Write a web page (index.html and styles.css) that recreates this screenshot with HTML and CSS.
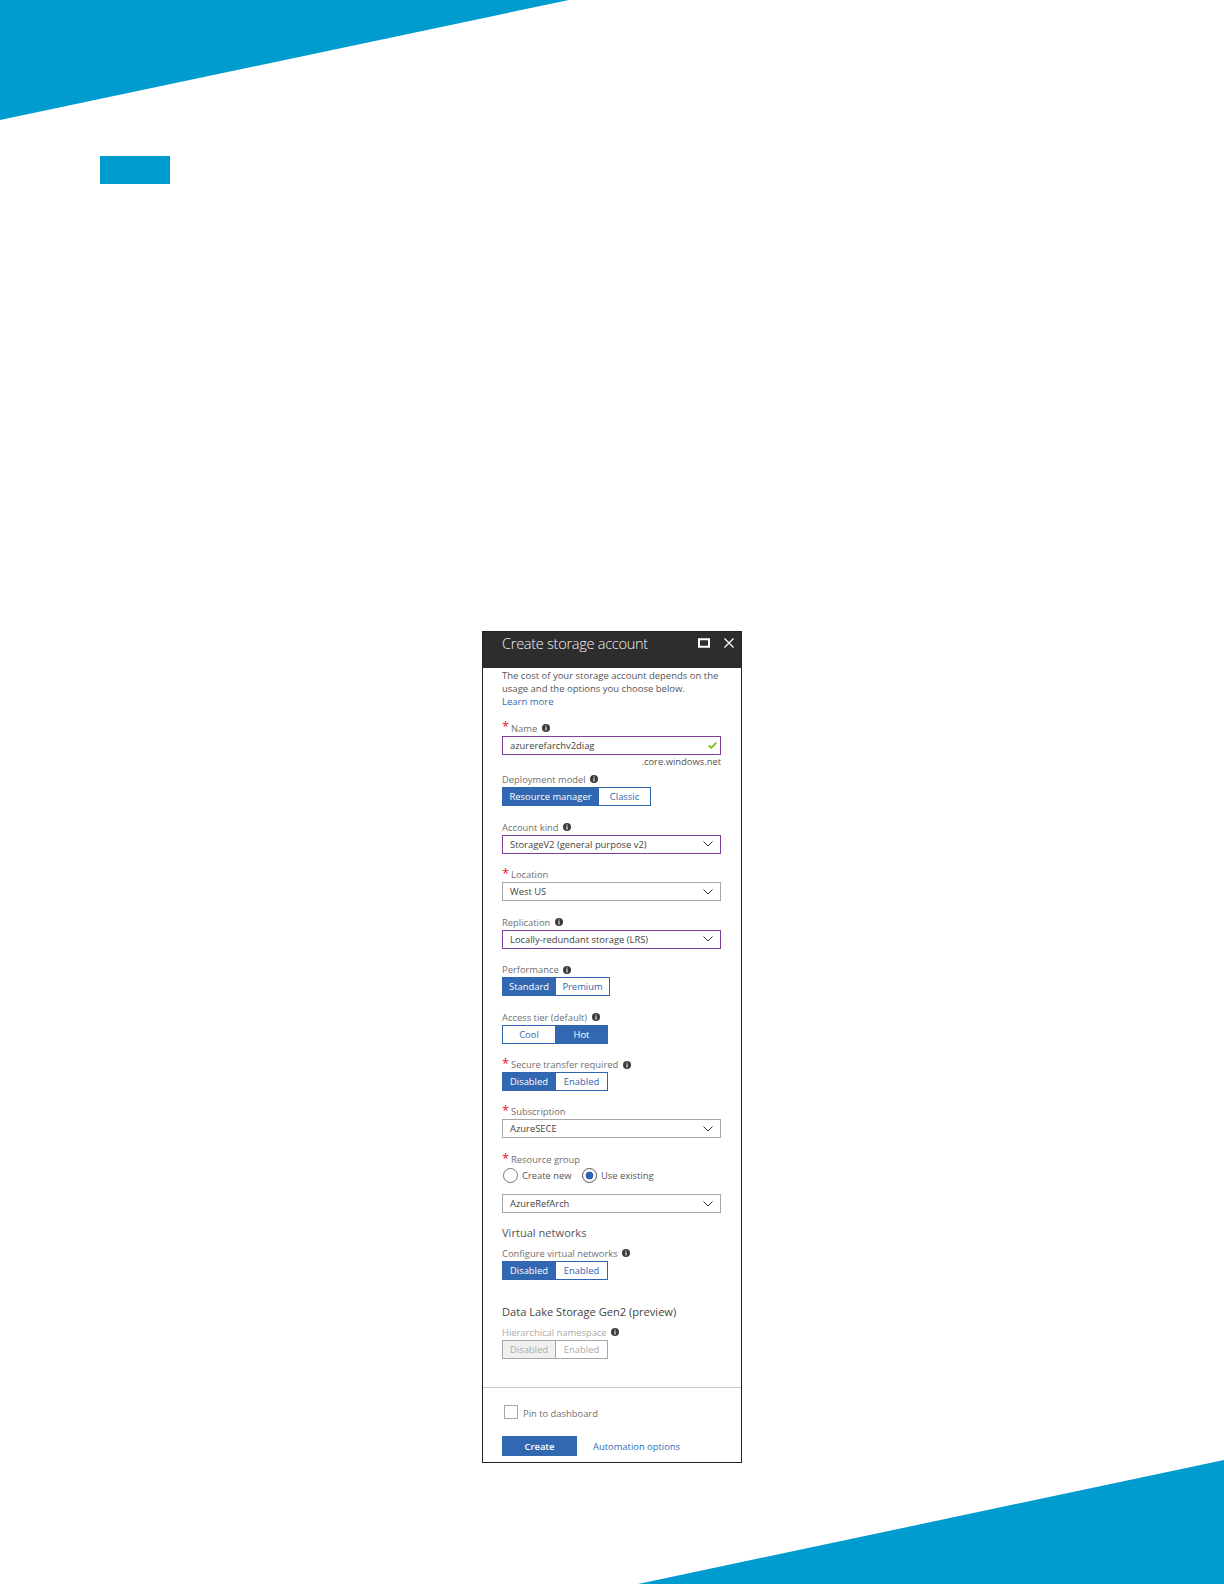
FILE: index.html
```html
<!DOCTYPE html>
<html lang="en">
<head>
    <meta charset="UTF-8">
    <meta name="viewport" content="width=device-width, initial-scale=1.0">
    <title>Create storage account</title>
    <link rel="stylesheet" href="styles.css">
</head>
<body>
    <div class="corner-top"></div>
    <div class="tag"></div>

    <div class="blade">
        <div class="blade-header">
            <h2>Create storage account</h2>
            <svg class="head-icon" width="12" height="10" viewBox="0 0 12 10"><path d="M1 1.25h10v7.5H1z" fill="none" stroke="#fff" stroke-width="2"/></svg>
            <svg class="head-icon" width="10" height="10" viewBox="0 0 10 10"><path d="M.5.5l9 9M9.5.5l-9 9" fill="none" stroke="#fff" stroke-width="1.2"/></svg>
        </div>

        <div class="blade-body">
            <p class="intro">The cost of your storage account depends on the<br>usage and the options you choose below.<br><a href="#">Learn more</a></p>

            <!-- Name -->
            <div class="field name-field">
                <label class="req">Name <svg class="info"><use href="#info"/></svg></label>
                <div class="box edited">
                    <span>azurerefarchv2diag</span>
                    <svg class="check" width="9" height="7" viewBox="0 0 9 7"><path d="M.7 3.4l2.5 2.5L8.3.7" fill="none" stroke="#7fba00" stroke-width="1.7"/></svg>
                </div>
                <div class="suffix">.core.windows.net</div>
            </div>

            <div class="field">
                <label>Deployment model <svg class="info"><use href="#info"/></svg></label>
                <div class="toggle">
                    <span class="on wide">Resource manager</span>
                    <span class="classic">Classic</span>
                </div>
            </div>

            <div class="field">
                <label>Account kind <svg class="info"><use href="#info"/></svg></label>
                <div class="box edited">
                    <span>StorageV2 (general purpose v2)</span>
                    <svg class="chev"><use href="#chev"/></svg>
                </div>
            </div>

            <div class="field">
                <label class="req">Location</label>
                <div class="box">
                    <span>West US</span>
                    <svg class="chev"><use href="#chev"/></svg>
                </div>
            </div>

            <div class="field">
                <label>Replication <svg class="info"><use href="#info"/></svg></label>
                <div class="box edited">
                    <span>Locally-redundant storage (LRS)</span>
                    <svg class="chev"><use href="#chev"/></svg>
                </div>
            </div>

            <div class="field">
                <label>Performance <svg class="info"><use href="#info"/></svg></label>
                <div class="toggle">
                    <span class="on perf">Standard</span>
                    <span class="perf">Premium</span>
                </div>
            </div>

            <div class="field">
                <label>Access tier (default) <svg class="info"><use href="#info"/></svg></label>
                <div class="toggle">
                    <span>Cool</span>
                    <span class="on">Hot</span>
                </div>
            </div>

            <div class="field secure-field">
                <label class="req">Secure transfer required <svg class="info"><use href="#info"/></svg></label>
                <div class="toggle">
                    <span class="on">Disabled</span>
                    <span>Enabled</span>
                </div>
            </div>

            <div class="field">
                <label class="req">Subscription</label>
                <div class="box">
                    <span>AzureSECE</span>
                    <svg class="chev"><use href="#chev"/></svg>
                </div>
            </div>

            <div class="field group-field">
                <label class="req">Resource group</label>
                <div class="radios">
                    <span class="radio"></span><span class="radio-text">Create new</span>
                    <span class="radio checked"></span><span class="radio-text">Use existing</span>
                </div>
                <div class="box">
                    <span>AzureRefArch</span>
                    <svg class="chev"><use href="#chev"/></svg>
                </div>
            </div>

            <h3>Virtual networks</h3>
            <div class="field">
                <label>Configure virtual networks <svg class="info"><use href="#info"/></svg></label>
                <div class="toggle">
                    <span class="on">Disabled</span>
                    <span>Enabled</span>
                </div>
            </div>

            <h3 class="lake">Data Lake Storage Gen2 (preview)</h3>
            <div class="field muted">
                <label>Hierarchical namespace <svg class="info"><use href="#info"/></svg></label>
                <div class="toggle">
                    <span class="on">Disabled</span>
                    <span>Enabled</span>
                </div>
            </div>
        </div>

        <div class="blade-footer">
            <div class="pin"><span class="checkbox"></span><span class="pin-text">Pin to dashboard</span></div>
            <div class="actions">
                <button type="button" class="btn">Create</button>
                <a href="#">Automation options</a>
            </div>
        </div>
    </div>

    <div class="corner-bottom"></div>

    <svg class="defs" width="0" height="0">
        <symbol id="info" viewBox="0 0 9 9">
            <circle cx="4.5" cy="4.5" r="4.5" fill="#3c3c3c"/>
            <path d="M3.9 1.6h1.2v1.2H3.9zM3.9 3.6h1.2v3.8H3.9z" fill="#fff"/>
        </symbol>
        <symbol id="chev" viewBox="0 0 10 6">
            <path d="M.5.5L5 5 9.5.5" fill="none" stroke="#333" stroke-width="1"/>
        </symbol>
    </svg>
</body>
</html>
```

FILE: styles.css
```css
* { box-sizing: border-box; }
body { margin: 0; padding: 0; height: 1584px; overflow: hidden; background-color: #fff; font-family: "Open Sans", "Liberation Sans", sans-serif; font-size: 9.4px; color: #555; }
a { color: #2f6cb8; text-decoration: none; }

.corner-top { width: 569px; height: 120px; background-color: #009cd0; clip-path: polygon(0 0, 100% 0, 0 100%); }
.tag { width: 70px; height: 28px; margin: 36px 0 0 100px; background-color: #009cd0; }
.corner-bottom { width: 586px; height: 124px; margin: -3px 0 0 auto; background-color: #009cd0; clip-path: polygon(0 100%, 100% 0, 100% 100%); }

.blade { width: 260px; height: 832px; margin: 447px 0 0 482px; border: 1px solid #222; background-color: #fff; display: flex; flex-direction: column; }
.blade-header { height: 36px; padding: 0 7px 0 19px; background-color: #2d2d2d; color: #fff; display: flex; align-items: flex-start; }
.blade-header h2 { margin: 1px auto 0 0; font-size: 14.6px; line-height: 20px; font-weight: 300; letter-spacing: -0.3px; color: #f2f2f2; }
.head-icon { margin-top: 6px; flex: none; }
.head-icon + .head-icon { margin-left: 14px; }

.blade-body { padding: 0 20px 0 19px; flex: 1; }
.intro { margin: 0 0 11.3px; line-height: 13.3px; padding-top: 0.7px; font-size: 9.5px; white-space: nowrap; }

.field { margin-bottom: 12.55px; }
.name-field { margin-bottom: 0; }
.secure-field { margin-bottom: 12.1px; }
.field label { display: block; height: 16px; line-height: 18px; white-space: nowrap; color: #707070; }
.name-field label { line-height: 17px; }
.req { padding-left: 9px; position: relative; }
.req::before { content: "*"; position: absolute; left: 0; top: -2px; color: #e81123; font-size: 13px; }
.info { width: 8px; height: 8px; margin-left: 2px; vertical-align: -0.5px; }

.box { height: 19px; padding: 0 7px; border: 1px solid #a6a6a6; display: flex; align-items: center; justify-content: space-between; color: #444; white-space: nowrap; }
.box.edited { border-color: #7f3f98; }
.check { margin-right: -4px; }
.chev { width: 10px; height: 6px; }
.suffix { height: 16.1px; line-height: 14px; text-align: right; color: #555; }

.toggle { display: flex; height: 19px; }
.toggle span { flex: none; width: 52px; border: 1px solid #2f65b0; border-left: none; color: #2f65b0; text-align: center; line-height: 17px; white-space: nowrap; }
.toggle span:first-child { width: 54px; border-left: 1px solid #2f65b0; }
.toggle span.on { background-color: #3268b1; color: #fff; }
.toggle span.wide { width: 97px; }
.toggle span.classic { width: 52px; }
.toggle span.perf { width: 54px; }

.muted label { color: #aaa; }
.muted .toggle span, .muted .toggle span:first-child { border-color: #a6a6a6; color: #aaa; }
.muted .toggle span.on { background-color: #f0f0f0; color: #aaa; }

.group-field { margin-bottom: 0; }
.radios { display: flex; align-items: center; height: 16px; margin: 0.5px 0 10.9px 1px; color: #555; }
.radio { width: 15px; height: 15px; border: 1px solid #777; border-radius: 50%; background-color: #fff; flex: none; }
.radio.checked { border-color: #555; background: radial-gradient(circle, #2f65b0 0 3.6px, #fff 4.2px); }
.radio-text { margin-left: 4px; margin-right: 13px; width: 47px; white-space: nowrap; }

h3 { margin: 11.6px 0 4px; height: 16px; line-height: 16px; font-size: 11.1px; font-weight: 400; color: #555; }
.lake { margin-top: 24.3px; margin-bottom: 3.4px; color: #444; }

.blade-footer { height: 75px; border-top: 1px solid #c8c8c8; padding: 16px 0 0 19px; }
.pin { display: flex; align-items: center; height: 15px; padding-left: 2px; color: #707070; }
.pin-text { margin-top: 4px; }
.checkbox { width: 14px; height: 14px; border: 1px solid #a6a6a6; margin-right: 5px; flex: none; }
.actions { display: flex; align-items: center; margin-top: 17px; }
.actions a { margin-left: 16px; }
.btn { width: 75px; height: 20px; padding: 0; background-color: #3268b1; color: #fff; border: none; font-family: inherit; font-size: 9.4px; font-weight: 600; cursor: pointer; }
.defs { display: block; }
```
